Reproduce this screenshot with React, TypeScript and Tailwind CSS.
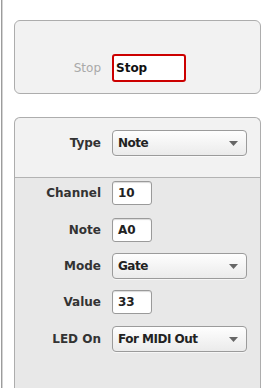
import React from "react";

const Label = ({ children, light }: { children: React.ReactNode; light?: boolean }) => (
  <div
    className={
      light
        ? "w-[86px] text-right text-[12px] leading-none text-[#a9a9a9]"
        : "w-[86px] text-right text-[12px] leading-none font-bold text-[#333333]"
    }
  >
    {children}
  </div>
);

const Select = ({ value }: { value: string }) => (
  <div className="ml-[11px] w-[135px] h-[26px] rounded-[4px] border border-[#9b9b9b] bg-gradient-to-b from-[#fefefe] to-[#ebebeb] flex items-center pl-[5px] pr-[8px] shadow-[0_1px_0_rgba(255,255,255,0.6)]">
    <span className="flex-1 text-[12px] font-bold tracking-[-0.5px] text-[#222222] leading-none">{value}</span>
    <svg width="9" height="5" viewBox="0 0 9 5">
      <path d="M0 0 H9 L4.5 5 Z" fill="#666666" />
    </svg>
  </div>
);

const NumInput = ({ value }: { value: string }) => (
  <div className="ml-[11px] w-[40px] h-[24px] rounded-[3px] border border-[#9a9a9a] bg-white flex items-center pl-[5px] shadow-[inset_0_1px_1px_rgba(0,0,0,0.15)]">
    <span className="text-[12px] font-bold text-[#222222] leading-none">{value}</span>
  </div>
);

export default function App() {
  return (
    <div className="w-[272px] h-[388px] bg-white flex overflow-hidden font-['DejaVu_Sans',sans-serif]">
      <div className="w-px" />
      <div className="w-px bg-[#9c9c9c]" />
      <div className="w-px bg-[#d4d4d4]" />
      <div className="flex-1 pl-[11px] pt-5 flex flex-col">
        <div className="w-[247px] h-[74px] rounded-[6px] border border-[#adadad] bg-[#f2f2f2] pt-[33px]">
          <div className="flex items-center">
            <Label light>Stop</Label>
            <div className="ml-[11px] w-[74px] h-[28px] rounded-[3px] border-2 border-[#cc0000] bg-white flex items-center pl-[2px]">
              <span className="text-[12px] font-bold text-[#111111] leading-none">Stop</span>
            </div>
          </div>
        </div>

        <div className="mt-[23px] w-[247px] flex-1 rounded-t-[6px] border border-b-0 border-[#adadad] bg-[#e8e8e8] flex flex-col">
          <div className="h-[60px] rounded-t-[6px] bg-[#f2f2f2] border-b border-[#b3b3b3] pt-[12px]">
            <div className="flex items-center">
              <Label>Type</Label>
              <Select value="Note" />
            </div>
          </div>
          <div className="flex flex-col">
            <div className="flex items-center mt-[3px]">
              <Label>Channel</Label>
              <NumInput value="10" />
            </div>
            <div className="flex items-center mt-[13px]">
              <Label>Note</Label>
              <NumInput value="A0" />
            </div>
            <div className="flex items-center mt-[11px]">
              <Label>Mode</Label>
              <Select value="Gate" />
            </div>
            <div className="flex items-center mt-[11px]">
              <Label>Value</Label>
              <NumInput value="33" />
            </div>
            <div className="flex items-center mt-[12px]">
              <Label>LED On</Label>
              <Select value="For MIDI Out" />
            </div>
          </div>
        </div>
      </div>
    </div>
  );
}
